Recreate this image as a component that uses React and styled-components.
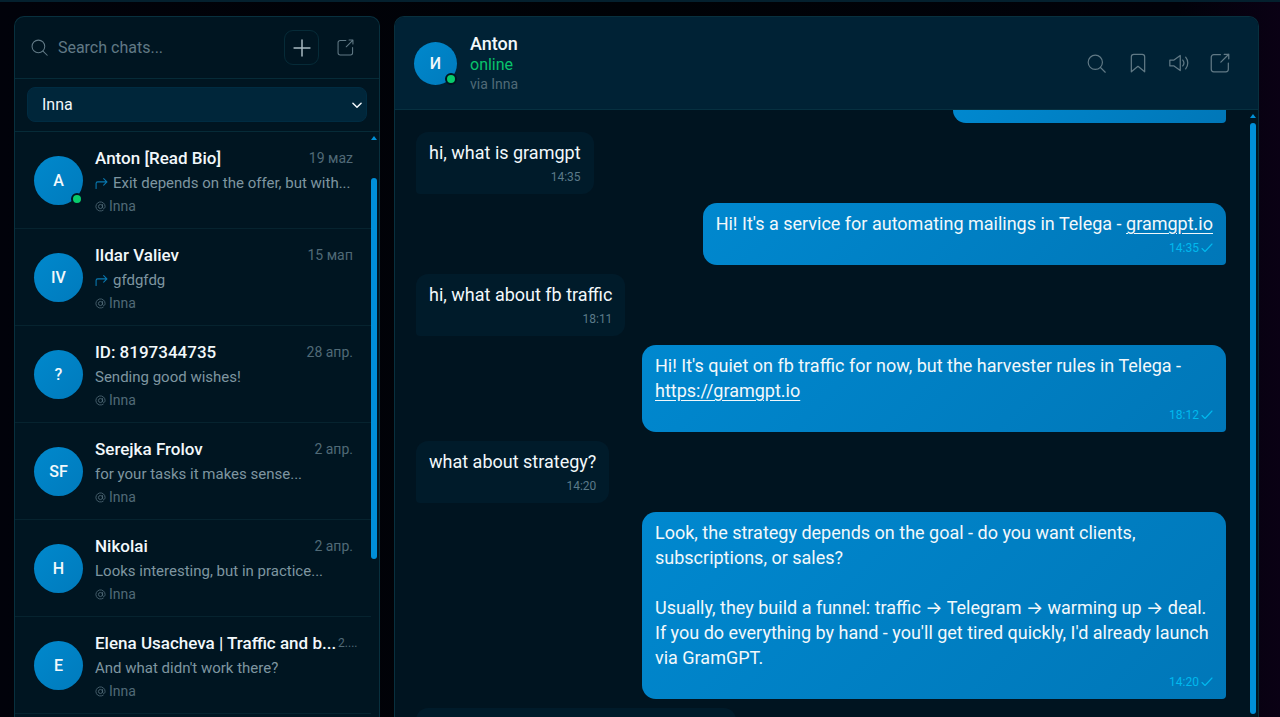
import React from "react";
import styled, { createGlobalStyle } from "styled-components";

const GlobalStyle = createGlobalStyle`
* {
    box-sizing: border-box;
}

body {
    margin: 0;
    background: #01030b;
    color: #f2f8fb;
    font-family: Roboto, Inter, "Noto Sans", sans-serif;
    overflow: hidden;
}

button, input, select {
    font: inherit;
    color: inherit;
}
`;

const Page = styled.div`
    height: 100vh;
    display: flex;
    gap: 14px;
    padding: 14px 21px 0 14px;
    border-top: 2px solid #04202e;
    background: linear-gradient(90deg, #01020a 0%, #000206 50%, #01020a 92%, #0a0114 100%);
`;

const Panel = styled.div`
    display: flex;
    flex-direction: column;
    min-width: 0;
    border: 1px solid #08303e;
    border-bottom: 0;
    border-radius: 10px 10px 0 0;
    background: #001521;
    overflow: hidden;
`;

const Sidebar = styled(Panel)`
    flex: 0 0 366px;
`;

const Chat = styled(Panel)`
    flex: 1;
`;

const SearchBar = styled.div`
    display: flex;
    align-items: center;
    gap: 9px;
    height: 62px;
    flex-shrink: 0;
    padding: 0 16px;
    border-bottom: 1px solid #062b38;
    color: #607985;
`;

const SearchLabel = styled.label`
    display: flex;
    flex: 1;
    min-width: 0;
    align-items: center;
    gap: 10px;
`;

const SearchInput = styled.input`
    width: 100%;
    min-width: 0;
    padding: 0;
    border: 0;
    outline: 0;
    background: none;
    font-size: 16px;

    &::placeholder {
        color: #607985;
        opacity: 1;
    }
`;

const IconButton = styled.button`
    display: flex;
    align-items: center;
    justify-content: center;
    width: 35px;
    height: 35px;
    flex-shrink: 0;
    padding: 0;
    border: 1px solid ${({ $outlined }) => ($outlined ? "#062b38" : "transparent")};
    border-radius: 9px;
    background: none;
    color: ${({ $outlined }) => ($outlined ? "#a9bac2" : "#607985")};
    cursor: pointer;
`;

const AccountBar = styled.div`
    position: relative;
    flex-shrink: 0;
    padding: 8px 12px 9px;
    border-bottom: 1px solid #062b38;
`;

const AccountSelect = styled.select`
    display: block;
    width: 100%;
    height: 35px;
    padding: 0 14px;
    border: 1px solid #002c42;
    border-radius: 8px;
    appearance: none;
    background: #00263a;
    font-size: 16px;
`;

const Chevron = styled.span`
    position: absolute;
    right: 15px;
    top: 19px;
    display: flex;
    pointer-events: none;
`;

const ScrollArea = styled.div`
    display: flex;
    flex: 1;
    min-height: 0;
`;

const Scrollbar = styled.div`
    display: flex;
    flex-direction: column;
    align-items: center;
    flex-shrink: 0;
    width: 6px;
    margin: 4px 2px 3px 0;
`;

const ArrowUp = styled.span`
    border: 3px solid transparent;
    border-top: 0;
    border-bottom: 4px solid #0090d8;
`;

const Thumb = styled.span`
    width: 6px;
    margin-top: ${({ $top }) => $top}px;
    flex: ${({ $length }) => ($length ? `0 0 ${$length}` : "1")};
    border-radius: 3px;
    background: #008fd9;
`;

const List = styled.ul`
    flex: 1;
    min-width: 0;
    margin: 0;
    padding: 0;
    list-style: none;
    overflow: hidden;
`;

const Row = styled.li`
    display: flex;
    align-items: center;
    gap: 12px;
    height: 97px;
    padding: 0 18px 0 19px;
    border-bottom: 1px solid #06232f;
`;

const Avatar = styled.div`
    position: relative;
    display: flex;
    align-items: center;
    justify-content: center;
    flex-shrink: 0;
    width: ${({ $size }) => $size}px;
    height: ${({ $size }) => $size}px;
    border-radius: 50%;
    background: linear-gradient(135deg, #0088cc, #007bbd);
    font-size: 16px;
    font-weight: 500;
`;

const OnlineDot = styled.span`
    position: absolute;
    right: 0;
    bottom: 0;
    width: 12px;
    height: 12px;
    border: 2px solid #001521;
    border-radius: 50%;
    background: #08cc6c;
`;

const RowBody = styled.div`
    flex: 1;
    min-width: 0;
    padding-top: 2px;
`;

const RowHead = styled.div`
    display: flex;
    align-items: center;
    justify-content: space-between;
    gap: 2px;
    line-height: 24px;
    white-space: nowrap;
`;

const Name = styled.span`
    font-size: 17px;
    font-weight: 500;
`;

const DateText = styled.span`
    font-size: ${({ $small }) => ($small ? 12 : 14)}px;
    color: #506a77;
`;

const Preview = styled.div`
    display: flex;
    align-items: center;
    gap: 5px;
    line-height: 26px;
    font-size: 15px;
    color: #7e95a0;
    white-space: nowrap;
`;

const ForwardMark = styled.span`
    display: flex;
    color: #0878b0;
`;

const Via = styled.div`
    display: flex;
    align-items: center;
    gap: 3px;
    line-height: 20px;
    font-size: 14px;
    color: #506a77;
`;

const ChatHeader = styled.header`
    display: flex;
    align-items: center;
    gap: 13px;
    height: 93px;
    flex-shrink: 0;
    padding: 0 21px 0 19px;
    border-bottom: 1px solid #063040;
    background: #002235;
`;

const Person = styled.div`
    flex: 1;
    min-width: 0;
`;

const PersonName = styled.h1`
    margin: 0;
    font-size: 18px;
    line-height: 22px;
    font-weight: 500;
`;

const Status = styled.div`
    font-size: 16px;
    line-height: 20px;
    color: #08c46c;
`;

const ViaName = styled.div`
    font-size: 14px;
    line-height: 18px;
    color: #506a77;
`;

const Actions = styled.div`
    display: flex;
    gap: 6px;
`;

const Messages = styled.div`
    display: flex;
    flex: 1;
    flex-direction: column;
    gap: 9px;
    min-width: 0;
    padding: 0 24px 0 21px;
    overflow: hidden;
    background: #001420;
`;

const Bubble = styled.div`
    flex-shrink: 0;
    align-self: ${({ $own }) => ($own ? "flex-end" : "flex-start")};
    max-width: 584px;
    padding: 8px 13px 5px;
    border-radius: ${({ $own }) => ($own ? "14px 14px 4px 14px" : "12px 12px 12px 4px")};
    background: ${({ $own }) => ($own ? "linear-gradient(135deg, #0088cf, #0077b8)" : "#001b2a")};
`;

// Messages cut by the upper and lower edge of the scrolled area
const CutBubble = styled(Bubble)`
    width: ${({ $own }) => ($own ? 273 : 320)}px;
    height: 13px;
    padding: 0;
    border-radius: ${({ $own }) => ($own ? "0 0 4px 13px" : "12px 12px 0 0")};
`;

const BubbleText = styled.p`
    margin: 0;
    font-size: 18px;
    line-height: 25px;
    white-space: pre-line;

    a {
        color: inherit;
        text-underline-offset: 3px;
    }
`;

const Meta = styled.div`
    display: flex;
    align-items: center;
    justify-content: flex-end;
    gap: 2px;
    font-size: 12px;
    line-height: 24px;
    color: ${({ $own }) => ($own ? "#00b9ee" : "#5b7a89")};
`;

const Svg = ({ size, width = 1.5, children }) => (
    <svg width={size} height={size} viewBox="0 0 24 24" fill="none" stroke="currentColor"
        strokeWidth={width} strokeLinecap="round" strokeLinejoin="round" aria-hidden="true">
        {children}
    </svg>
);

const SearchIcon = ({ size }) => (
    <Svg size={size}><circle cx="10.5" cy="10.5" r="9" /><path d="m17 17 6 6" /></Svg>
);

const ExternalIcon = ({ size }) => (
    <Svg size={size}>
        <path d="M12.500 2H4.500A3 3 0 0 0 1.500 5v14.500a3 3 0 0 0 3 3H19a3 3 0 0 0 3-3V12M13 11l9.500-9.500M17 1.500h5.500V7" />
    </Svg>
);

const PlusIcon = () => (
    <Svg size={20} width={1.8}><path d="M12 2.500v19M2.500 12h19" /></Svg>
);

const BookmarkIcon = () => (
    <Svg size={20}><path d="M4 22.500V4.500A3 3 0 0 1 7 1.500h10a3 3 0 0 1 3 3v18L12 16Z" /></Svg>
);

const SoundIcon = () => (
    <Svg size={20}>
        <path d="M1 8.500h5L13.500 3v18L6 15.500H1ZM16.500 8.500a5.500 5.500 0 0 1 0 7M20 5a11 11 0 0 1 0 14" />
    </Svg>
);

const CheckIcon = () => (
    <Svg size={12} width={2.2}><path d="m2 13 6 6L22 4" /></Svg>
);

const ChevronIcon = () => (
    <Svg size={14} width={2.5}><path d="m5 9 7 7 7-7" /></Svg>
);

const ForwardIcon = () => (
    <Svg size={13} width={2}><path d="M2 21V12a3 3 0 0 1 3-3h17M16 3l6 6-6 6" /></Svg>
);

const AtIcon = () => (
    <Svg size={11} width={1.8}>
        <circle cx="12" cy="12" r="4.500" /><path d="M16.500 7.500v6c0 4 5.500 4 5.500-1.500a10 10 0 1 0-4 8" />
    </Svg>
);

const chats = [
    { initials: "A", name: "Anton [Read Bio]", date: "19 маz", text: "Exit depends on the offer, but with...", forwarded: true, online: true },
    { initials: "IV", name: "Ildar Valiev", date: "15 маᴨ", text: "gfdgfdg", forwarded: true },
    { initials: "?", name: "ID: 8197344735", date: "28 апр.", text: "Sending good wishes!" },
    { initials: "SF", name: "Serejka Frolov", date: "2 апр.", text: "for your tasks it makes sense..." },
    { initials: "H", name: "Nikolai", date: "2 апр.", text: "Looks interesting, but in practice..." },
    { initials: "E", name: "Elena Usacheva | Traffic and b...", date: "2....", text: "And what didn't work there?", shortDate: true },
];

const messages = [
    { text: "hi, what is gramgpt", time: "14:35" },
    { own: true, text: "Hi! It's a service for automating mailings in Telega - ", link: "gramgpt.io", time: "14:35" },
    { text: "hi, what about fb traffic", time: "18:11" },
    { own: true, text: "Hi! It's quiet on fb traffic for now, but the harvester rules in Telega - ", link: "https://gramgpt.io", time: "18:12" },
    { text: "what about strategy?", time: "14:20" },
    {
        own: true,
        text: "Look, the strategy depends on the goal - do you want clients, subscriptions, or sales?\n\nUsually, they build a funnel: traffic → Telegram → warming up → deal.\nIf you do everything by hand - you'll get tired quickly, I'd already launch via GramGPT.",
        time: "14:20",
    },
];

const ChatRow = ({ chat }) => (
    <Row>
        <Avatar $size={49}>
            {chat.initials}
            {chat.online && <OnlineDot />}
        </Avatar>
        <RowBody>
            <RowHead>
                <Name>{chat.name}</Name>
                <DateText $small={chat.shortDate}>{chat.date}</DateText>
            </RowHead>
            <Preview>
                {chat.forwarded && <ForwardMark><ForwardIcon /></ForwardMark>}
                <span>{chat.text}</span>
            </Preview>
            <Via><AtIcon />Inna</Via>
        </RowBody>
    </Row>
);

const Message = ({ message }) => (
    <Bubble $own={message.own}>
        <BubbleText>
            {message.text}
            {message.link && <a href="#link">{message.link}</a>}
        </BubbleText>
        <Meta $own={message.own}>
            {message.time}
            {message.own && <CheckIcon />}
        </Meta>
    </Bubble>
);

const App = () => (
    <>
        <GlobalStyle />
        <Page>
            <Sidebar as="aside">
                <SearchBar>
                    <SearchLabel>
                        <SearchIcon size={19} />
                        <SearchInput type="text" placeholder="Search chats..." aria-label="Search chats" />
                    </SearchLabel>
                    <IconButton $outlined aria-label="New chat"><PlusIcon /></IconButton>
                    <IconButton aria-label="Open in window"><ExternalIcon size={17} /></IconButton>
                </SearchBar>
                <AccountBar>
                    <AccountSelect aria-label="Account" defaultValue="Inna">
                        <option>Inna</option>
                    </AccountSelect>
                    <Chevron><ChevronIcon /></Chevron>
                </AccountBar>
                <ScrollArea>
                    <List>
                        {chats.map((chat) => <ChatRow key={chat.name} chat={chat} />)}
                    </List>
                    <Scrollbar>
                        <ArrowUp />
                        <Thumb $top={38} $length="66%" />
                    </Scrollbar>
                </ScrollArea>
            </Sidebar>
            <Chat as="main">
                <ChatHeader>
                    <Avatar $size={43}>И<OnlineDot /></Avatar>
                    <Person>
                        <PersonName>Anton</PersonName>
                        <Status>online</Status>
                        <ViaName>via Inna</ViaName>
                    </Person>
                    <Actions>
                        <IconButton aria-label="Search"><SearchIcon size={19} /></IconButton>
                        <IconButton aria-label="Bookmark"><BookmarkIcon /></IconButton>
                        <IconButton aria-label="Sound"><SoundIcon /></IconButton>
                        <IconButton aria-label="Open in window"><ExternalIcon size={20} /></IconButton>
                    </Actions>
                </ChatHeader>
                <ScrollArea>
                    <Messages>
                        <CutBubble $own />
                        {messages.map((message, index) => <Message key={index} message={message} />)}
                        <CutBubble />
                    </Messages>
                    <Scrollbar>
                        <ArrowUp />
                        <Thumb $top={5} />
                    </Scrollbar>
                </ScrollArea>
            </Chat>
        </Page>
    </>
);

export default App;
